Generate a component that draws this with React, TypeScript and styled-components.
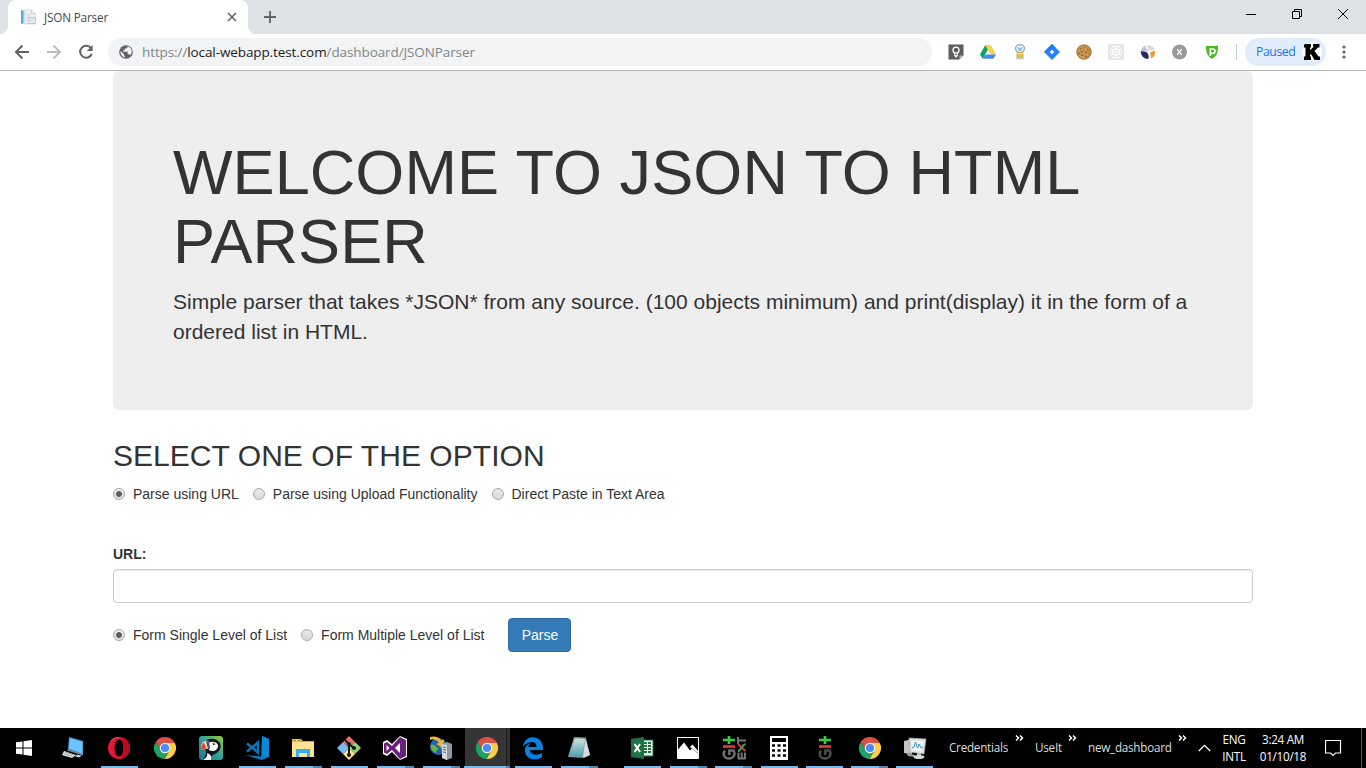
import React, { useState } from "react";
import styled, { createGlobalStyle } from "styled-components";

const GlobalStyle = createGlobalStyle`
  *, *::before, *::after { box-sizing: border-box; }
  body { margin: 0; background: #fff; overflow: hidden; }
  svg { display: block; flex: none; }
`;

const uiFont = `"Open Sans", "Noto Sans", sans-serif`;

const Screen = styled.div`
  width: 1366px;
  height: 768px;
  display: flex;
  flex-direction: column;
  overflow: hidden;
  background: #fff;
`;

/* Browser window */

const TabStrip = styled.div`
  height: 34px;
  flex: none;
  display: flex;
  background: #dee1e6;
`;

const TabFoot = styled.div<{ $side: "left" | "right" }>`
  width: 8px;
  align-self: stretch;
  background: radial-gradient(
    circle at ${(p) => (p.$side === "left" ? "0" : "100%")} 26px,
    #dee1e6 7.5px,
    #fff 8.5px
  );
  clip-path: inset(26px 0 0 0);
`;

const Tab = styled.div`
  width: 240px;
  display: flex;
  align-items: center;
  padding: 0 10px 0 12px;
  background: #fff;
  border-radius: 8px 8px 0 0;
`;

const TabTitle = styled.span`
  flex: 1;
  margin-left: 8px;
  font: 11.7px/16px ${uiFont};
  letter-spacing: -0.15px;
  color: #45494d;
`;

const NewTab = styled.div`
  padding: 10px 0 0 7px;
`;

const WindowControls = styled.div`
  margin-left: auto;
  display: flex;
  height: 28px;
`;

const WindowButton = styled.div`
  width: 46px;
  display: flex;
  align-items: center;
  justify-content: center;
`;

const Toolbar = styled.div`
  height: 37px;
  flex: none;
  display: flex;
  align-items: center;
  padding: 0 14px;
  background: #fff;
  border-bottom: 1px solid #b5b4b6;
`;

const NavButtons = styled.div`
  display: flex;
  gap: 16px;
  width: 94px;
`;

const AddressBar = styled.div`
  width: 824px;
  height: 28px;
  display: flex;
  align-items: center;
  padding-left: 10px;
  gap: 8px;
  border-radius: 14px;
  background: #f1f3f4;
`;

const Address = styled.span`
  font: 13.5px/20px ${uiFont};
  letter-spacing: -0.1px;
  color: #80868b;
  white-space: nowrap;
`;

const Host = styled.span`
  color: #202124;
`;

const Extensions = styled.div`
  display: flex;
  gap: 16px;
  margin-left: 16px;
`;

const Separator = styled.div`
  width: 1px;
  height: 16px;
  margin: 0 8px 0 16px;
  background: #c8cbcf;
`;

const ProfilePill = styled.div`
  width: 81px;
  height: 28px;
  display: flex;
  align-items: center;
  justify-content: space-between;
  padding: 0 4px 0 11px;
  border-radius: 14px;
  background: #e1ecfb;
  font: 12.3px/20px ${uiFont};
  letter-spacing: -0.45px;
  color: #1a73e8;
`;

const MenuDots = styled.div`
  margin-left: 16px;
`;

/* Page */

const Page = styled.main`
  flex: 1;
  width: 1140px;
  margin: 0 auto;
  font: 14px/20px "Liberation Sans", Arial, sans-serif;
  color: #333;
`;

const Jumbotron = styled.section`
  height: 339px;
  padding: 67px 60px 48px;
  margin-bottom: 29px;
  border-radius: 6px;
  background: #eee;
`;

const Title = styled.h1`
  margin: 0 0 10px;
  font-size: 63px;
  font-weight: 400;
  line-height: 69.3px;
  letter-spacing: 0.08px;
`;

const Lead = styled.p`
  margin: 0;
  font-size: 21px;
  line-height: 30px;
`;

const SectionTitle = styled.h2`
  margin: 0 0 12px;
  font-size: 30px;
  font-weight: 400;
  line-height: 33px;
  letter-spacing: 0.04px;
`;

const OptionRow = styled.div`
  display: flex;
  align-items: center;
  gap: 14px;
`;

const Option = styled.label`
  display: flex;
  align-items: center;
  gap: 8px;
  white-space: nowrap;
`;

const Radio = styled.input`
  appearance: none;
  width: 12px;
  height: 12px;
  margin: 0;
  border: 1px solid #a9a9a9;
  border-radius: 50%;
  background: linear-gradient(#e9e9e9, #d9d9d9);
  &:checked {
    background: radial-gradient(circle, #5c5c5c 2.5px, transparent 3.3px),
      linear-gradient(#ececec, #dedede);
  }
`;

const UrlField = styled.div`
  margin: 40px 0 15px;
`;

const FieldLabel = styled.label`
  display: block;
  margin-bottom: 5px;
  font-weight: 700;
`;

const TextInput = styled.input`
  display: block;
  width: 100%;
  height: 34px;
  padding: 6px 12px;
  border: 1px solid #ccc;
  border-radius: 4px;
  box-shadow: inset 0 1px 1px rgba(0, 0, 0, 0.075);
  font: inherit;
  outline: none;
`;

const ParseButton = styled.button`
  width: 63px;
  height: 34px;
  margin-left: 10px;
  padding: 0;
  border: 1px solid #2e6da4;
  border-radius: 4px;
  background: #337ab7;
  color: #fff;
  font: inherit;
`;

/* Taskbar */

const Taskbar = styled.footer`
  height: 40px;
  flex: none;
  display: flex;
  background: #000;
  color: #fff;
  font: 11.7px/17px ${uiFont};
`;

const StartButton = styled.div`
  width: 50px;
  display: flex;
  align-items: center;
  padding-left: 16px;
`;

const TaskSlot = styled.div<{ $active?: boolean; $width: number; $gap?: number }>`
  width: ${(p) => p.$width}px;
  margin-left: ${(p) => p.$gap ?? 0}px;
  display: flex;
  flex-direction: column;
  align-items: center;
  justify-content: space-between;
  padding-top: 8px;
  background: ${(p) =>
    p.$active
      ? "linear-gradient(90deg, #000 1px, #353535 1px, #353535 42px, #1c1c1c 42px, #1c1c1c 43px, #303030 43px)"
      : "none"};
`;

const RunningBar = styled.div<{ $grouped?: boolean; $full?: boolean; $hidden?: boolean }>`
  width: ${(p) => (p.$full ? "100%" : "37px")};
  height: 2px;
  visibility: ${(p) => (p.$hidden ? "hidden" : "visible")};
  background: ${(p) =>
    p.$grouped
      ? `linear-gradient(90deg, #76b9ed ${p.$full ? 42 : 28}px, #5585aa ${p.$full ? 42 : 28}px)`
      : "#76b9ed"};
`;

const Tray = styled.div`
  flex: 1;
  display: flex;
  margin-left: 12px;
`;

const TrayFolder = styled.div<{ $width: number }>`
  width: ${(p) => p.$width}px;
  display: flex;
  justify-content: space-between;
  padding-top: 11px;
  margin-right: 11px;
  letter-spacing: -0.25px;
  color: #ddd;
  white-space: nowrap;
  svg { margin-top: -4px; }
`;

const TrayChevron = styled.div`
  width: 13px;
  margin: 16px 0 0;
`;

const TrayStack = styled.div<{ $width: number }>`
  width: ${(p) => p.$width}px;
  padding-top: 3px;
  text-align: center;
  letter-spacing: -0.3px;
  white-space: nowrap;
`;

const Notifications = styled.div`
  margin: 12px 0 0 16px;
`;

const ShowDesktop = styled.div`
  width: 5px;
  margin-left: auto;
  border-left: 1px solid #555;
`;

type IconProps = { size?: number; box?: number; children: React.ReactNode };
const Icon = ({ size = 24, box = 24, children }: IconProps) => (
  <svg width={size} height={size} viewBox={`0 0 ${box} ${box}`} fill="none">
    {children}
  </svg>
);

const ChromeLogo = () => (
  <Icon>
    <path fill="#dd5144" d="M2.77 6A11 11 0 0 1 21.8 7H12l-4.33 7.5Z" />
    <path fill="#ffcd46" d="M21.8 7A11 11 0 0 1 11.43 23l4.9-8.5L12 7Z" />
    <path fill="#1da261" d="M11.43 23A11 11 0 0 1 2.77 6l4.9 8.5h8.66Z" />
    <circle cx="12" cy="12" r="5.3" fill="#f4f4f4" />
    <circle cx="12" cy="12" r="4.1" fill="#4c8bf5" />
  </Icon>
);

const DocumentIcon = () => (
  <Icon size={16} box={16}>
    <path d="M1 1h5v14H1z" fill="#deecf5" />
    <path d="M1 1.5h2.500v13H1z" fill="#5da7d5" />
    <path d="M5 1h7l3 3v11H5z" fill="#f2f3f5" stroke="#d0d3d8" strokeWidth=".8" />
    <path d="M11.5 1v3.5H15M6.500 5H11M6.500 7H10" stroke="#d0d4da" />
    <path d="M8 8.5h7.5v6H8z" fill="#eef0f3" stroke="#b5bac3" strokeWidth=".8" />
    <path d="M9 10.5h5M9 12h5" stroke="#d2d5da" strokeWidth=".8" />
  </Icon>
);

const extensionIcons: React.ReactNode[] = [
  <Icon size={16} box={16}>
    <path d="M.5.5h15v11l-4 4H.5z" fill="#5d5d5d" />
    <path d="M11.5 15.5v-4h4z" fill="#bcbcbc" />
    <circle cx="8" cy="6.2" r="3" stroke="#fff" strokeWidth="1.3" />
    <path d="M6.7 8.800v3h2.6v-3M7 12.600h2" stroke="#fff" strokeWidth="1.1" />
  </Icon>,
  <Icon size={16} box={16}>
    <path d="M5.3 1 0 10.4l2.7 4.3 5.4-9.4z" fill="#11a15f" />
    <path d="M5.3 1h5.4L16 10.4h-5.4z" fill="#ffcf48" />
    <path d="M2.7 14.7 5.2 10.4H16l-2.6 4.3z" fill="#4688f4" />
  </Icon>,
  <Icon size={16} box={16}>
    <path d="M6 9 3.7 5.8V3L5.4.8h5.2L12.3 3v2.8L10 9z" fill="#e9f2ff" stroke="#668fc5" />
    <path d="m6 3 1 4 1-3 1 3 1-4" stroke="#98b7df" />
    <path d="M5 8.5h6v5H5z" fill="#e5c345" stroke="#b99730" strokeWidth=".7" />
    <path d="M5 9.500h6" stroke="#fff0a1" />
    <path d="M4 14.800h8" stroke="#bbb" />
  </Icon>,
  <Icon size={16} box={16}>
    <path d="m8 0 8 8-8 8-8-8z" fill="#2684ff" />
    <path d="m8 0 3 3-3 3-3 3-5-1z" fill="#247cf0" />
    <path d="m8 5.8 2.2 2.2L8 10.2 5.8 8z" fill="#fff" />
  </Icon>,
  <Icon size={16} box={16}>
    <circle cx="8" cy="8" r="7.3" fill="#c3914b" stroke="#8a6130" strokeWidth=".7" />
    <path d="M4 4h1.500M8.500 3h1M11 5.500h1.500M5 7.500h1.500M2.500 9.500H4M9.500 8.500H11M5.500 11.500H7M9.500 12.500H11M12.500 10h1" stroke="#7d5526" strokeWidth="1.2" />
    <path d="M4 3h2M9 5h2M3 7h1M7 9h2M10 11h2M6 13h2" stroke="#dab071" strokeWidth=".8" />
  </Icon>,
  <Icon size={16} box={16}>
    <path d="M0 0h16v16H0z" fill="#e4e4e4" />
    <g stroke="#fff" strokeWidth="1">
      <ellipse cx="8" cy="8" rx="6.5" ry="2.6" />
      <ellipse cx="8" cy="8" rx="6.5" ry="2.6" transform="rotate(60 8 8)" />
      <ellipse cx="8" cy="8" rx="6.5" ry="2.6" transform="rotate(120 8 8)" />
    </g>
    <circle cx="8" cy="8" r="1.3" fill="#fff" />
  </Icon>,
  <Icon size={16} box={16}>
    <path d="M.8 7.200A7 7 0 0 1 6 1.500c-.5 2.500.5 4 2.500 5L8 7.500z" fill="#c3c6ca" />
    <path d="M.8 7.500c2.500-.8 5 .2 6.700 1.500 1 1.500 1.500 3.500 1 5.700C4 15.300.8 12 .8 7.500Z" fill="#242e5e" />
    <path d="M7.500 1c4 0 7 2.300 7.500 5.200-2-.6-4-.2-5.300.6C7.500 6 6.800 3 7.500 1Z" fill="#dadbdd" />
    <path d="M15.200 7c.3 3.500-1.500 6.800-4.500 7.500.5-2.500-.2-4-.9-5.300 1.200-1.800 3.400-2.400 5.400-2.200Z" fill="#f49a27" />
  </Icon>,
  <Icon size={16} box={16}>
    <circle cx="7.500" cy="8" r="7.5" fill="#999" />
    <path d="m5.300 5.2 4.400 5.600m0-5.600-4.400 5.600" stroke="#fff" strokeWidth="1.3" />
  </Icon>,
  <Icon size={16} box={16}>
    <path d="M2 2c4 .2 8 .2 12-.5C14 9 13 12 7.700 15 3.700 12 2 9 2 2Z" fill="#45bd22" />
    <path d="M6.300 12V5h2.500a2.200 2.200 0 0 1 0 4.400H7" stroke="#fff" strokeWidth="1.6" />
  </Icon>,
];

const DesktopIcon = () => (
  <Icon>
    <path d="m8 1 14 4v14L7 13z" fill="#3e9cd5" />
    <path d="m8.800 2.200 12.500 3.500v11.800L8 12.400z" fill="#69c4ff" />
    <path d="m7 13 15 5v1.500L6 14.500z" fill="#7b8991" />
    <path d="m3 15 12 4-4 3-10-3z" fill="#e6ebed" />
    <path d="m4 16 9 3M2.500 17.500l9 3" stroke="#939da3" />
    <path d="m16 18.500 5 1.300-3 1.700-4-1z" fill="#c8cfd4" />
  </Icon>
);

const OperaIcon = () => (
  <Icon>
    <path fillRule="evenodd" d="M12 1a11 11 0 1 0 0 22 11 11 0 0 0 0-22Zm0 2.500c2.800 0 4.500 3.600 4.500 8.500s-1.700 8.500-4.500 8.500S7.500 17 7.500 12 9.200 3.500 12 3.500Z" fill="#e41830" />
    <path fillRule="evenodd" d="M12 1a11 11 0 0 1 7 19.500c-2 1.300-4.500 1-7 0 2.800 0 4.500-3.600 4.500-8.500S14.800 3.500 12 3.500c2.500-1 4.500-1 7 0C17 2 14.500 1 12 1Z" fill="#b80d20" />
    <path d="M12 1.500C8 1.500 5 3 3.500 5.500" stroke="#ff4a58" />
  </Icon>
);

const PuffinIcon = () => (
  <Icon>
    <defs>
      <linearGradient id="puffin" x1="0" y1="1" x2="1" y2="0">
        <stop stopColor="#17709b" />
        <stop offset=".55" stopColor="#36a49a" />
        <stop offset="1" stopColor="#9acb35" />
      </linearGradient>
    </defs>
    <rect width="24" height="24" rx="3" fill="url(#puffin)" />
    <path d="M6 6c3-5 12-4 15 1 2 5-1 9-5 11-3 1-5 4-8 6H4l3-6z" fill="#101b20" />
    <path d="M8 8c3-3 9-3 11 1 .5 4-4 8-9 5z" fill="#fff" />
    <path d="M10 5C5 4 1 7 2 14c3-2 6-1 9-1z" fill="#f1dfb7" />
    <path d="M2 14c0-4 1-6 3-7.500L7.500 13C5 12.500 3.500 13 2 14Z" fill="#d94b33" />
    <path d="M7 5.500 10 5l1 8H9z" fill="#45576a" />
    <path d="m13 8 2-1.500L16.500 9z" fill="#e05a35" />
    <circle cx="14.700" cy="8.200" r=".8" fill="#16191b" />
    <path d="M8 17c3 1 5 3 4 7H4c3-2 5-4 4-7Z" fill="#f6f7ed" />
  </Icon>
);

const CodeIcon = () => (
  <Icon>
    <path d="m17 0 7 3v18l-7 3-17-5 16 1.5z" fill="#0879bf" />
    <path d="M17 0v22l7-2V3z" fill="#0789d8" />
    <path d="m2 7.500 11 9v-10l-11 9" stroke="#0879bf" strokeWidth="2.500" />
  </Icon>
);

const ExplorerIcon = () => (
  <Icon>
    <path d="M1 3h9l2 2h11v16H1z" fill="#d9a935" />
    <path d="M2 3h7v3H2z" fill="#f3c95b" />
    <path d="M1 6h22v15H1z" fill="#ffe293" />
    <path d="M5 21v-8h14v8h-3v-4H8v4z" fill="#37aee5" />
    <path d="M3 4.500h2m2 0h2" stroke="#9d792b" />
  </Icon>
);

const GitIcon = () => (
  <Icon>
    <path d="m12 0 6 6-6 6-6-6z" fill="#f26d66" />
    <path d="m18 6 6 6-6 6-6-6z" fill="#94d47a" />
    <path d="m6 6 6 6-6 6-6-6z" fill="#77b8f5" />
    <path d="m12 12 6 6-6 6-6-6z" fill="#ffe18a" />
    <path d="m8 4 4 4v12m0-12 5 4" stroke="#14181c" strokeWidth="2" />
    <circle cx="12" cy="8" r="2" fill="#14181c" />
    <circle cx="12" cy="19" r="2" fill="#14181c" />
    <circle cx="17" cy="12" r="2" fill="#14181c" />
  </Icon>
);

const StudioIcon = () => (
  <Icon>
    <path d="m17 0 7 3v18l-7 3-8-8-5 4-4-2V6l4-2 5 4z" fill="#fff" />
    <path d="m17 1 6 3v16l-6 3-8-9-5 4-3-1.5v-9L4 6l5 4zM3.500 9v6l3-3zM17 7l-5 5 5 5z" fill="#68217a" fillRule="evenodd" />
  </Icon>
);

const ServerIcon = () => (
  <Icon>
    <circle cx="9.500" cy="10.500" r="8.500" fill="#2361b4" />
    <path d="M1.500 9c4-2 5 2 8 3l-3 5-4-3zM10 8c3-2 5 0 6 2l-3 5z" fill="#66b63d" />
    <path d="M1 1c5-1.500 9 0 11 3.500l3-1L14 12 7 8l3-1.300C8 4 5 3 1 4z" fill="#f6b62d" />
    <path d="m13 8 5-2 5 2v14l-5 2-5-2z" fill="#8f989f" />
    <path d="m13 8 5 1v15l-5-2z" fill="#d3d7da" />
    <path d="m14 11 3 .5m-3 2 3 .5m-3 2 3 .5" stroke="#627078" />
  </Icon>
);

const EdgeIcon = () => (
  <Icon>
    <path d="M2 10.500C4-3 22-1 22 12v2H9c0 5 7 6 12 3v4.500C12 26 3.500 22 4 14c.2-4 3-6 6-7-2 1.200-2.400 2.300-2.700 4h8.300c0-7-8.500-6-13.600-.5Z" fill="#0780df" />
  </Icon>
);

const NotepadIcon = () => (
  <Icon>
    <defs>
      <linearGradient id="notepad" x1="0" y1="0" x2="0" y2="1">
        <stop stopColor="#cfe2e2" />
        <stop offset="1" stopColor="#4d9eb1" />
      </linearGradient>
    </defs>
    <path d="m7 1 12 1 4 17-6 3-16-1z" fill="#8f9491" />
    <path d="m8 2 10 1-3 18-13.500-1z" fill="url(#notepad)" />
    <path d="m18.500 3 4.500 16-6 2.500-1-1z" fill="#d7dce0" />
    <path d="M7 2h12" stroke="#9c978a" />
  </Icon>
);

const ExcelIcon = () => (
  <Icon>
    <path d="M12 4h11v16H12z" fill="#e8f1eb" stroke="#207245" />
    <path d="M14 7h3m1 0h3M14 10h3m1 0h3M14 13h3m1 0h3M14 16h3m1 0h3" stroke="#207245" strokeWidth="1.8" />
    <path d="m1 3 13-2v22L1 21z" fill="#207245" />
    <path d="m4.500 8 5.500 8M10 8l-5.500 8" stroke="#fff" strokeWidth="2" />
  </Icon>
);

const PhotosIcon = () => (
  <Icon>
    <path d="M1.500 1.500h21v21h-21z" stroke="#fff" />
    <path d="m2 13.500 6-7 6 8 2-2 6 5v5H2z" fill="#fff" />
    <path d="m14 11 2.500-2.500L22 15v2z" fill="#fff" />
  </Icon>
);

const GitGuiIcon = ({ extended = false }: { extended?: boolean }) => {
  const letter = extended ? "#6f6f6f" : "#4a4a4a";
  return (
    <Icon>
      <g transform={extended ? "translate(0 0)" : "translate(5 0)"}>
        <path d="M7 0v8M1 4h12" stroke="#3fc649" strokeWidth="2.700" />
        <path d="M1 10.500h12" stroke="#dc3b35" strokeWidth="2.700" />
        <path d="M3 14.500c-3 4-.5 8 4 8s7-4 4.500-8H7.300v4.500" stroke={letter} strokeWidth="2.400" />
      </g>
      {extended && (
        <g strokeWidth="1.900">
          <path d="M16 1v7m0-3.500h8M16.500 16.500v6h6.500v-6m-3.300 0v6" stroke="#777" />
          <path d="m16 8 7.500 7" stroke="#da3b35" />
          <path d="M16 15c3 0 4-6 7.500-7" stroke="#42a947" />
        </g>
      )}
    </Icon>
  );
};

const CalculatorIcon = () => (
  <Icon>
    <path d="M3 0h18v24H3z" fill="#fff" />
    <path d="M5 2h14v4H5z" fill="#000" />
    <path d="M5 9.500h14M5 14.500h14M5 19.500h14" stroke="#000" strokeWidth="2.600" strokeDasharray="3 2.500" />
  </Icon>
);

const MonitorIcon = () => (
  <Icon>
    <path d="m1 5 8-2v15l-8-1z" fill="#c3c6c4" />
    <path d="m3 17 9 2v2l-7-1z" fill="#999f9f" />
    <path d="m6 2 17 1-2 15-14-2z" fill="#dfe2df" stroke="#9da7a9" strokeWidth=".7" />
    <path d="m8.500 4.500 12 .7-1 10-11-1z" fill="#eef8fb" />
    <path d="m9 12 2-1 1.500-5 2 6 1.500-4 2 4 2-1" stroke="#3c92ba" />
    <path d="M14 17h4v3h-4z" fill="#b7bcbb" />
    <ellipse cx="16" cy="21" rx="5.500" ry="2" fill="#d7d9d8" />
  </Icon>
);

type Task = { name: string; icon: React.ReactNode; width?: number; gap?: number; idle?: boolean; grouped?: boolean; active?: boolean };
const tasks: Task[] = [
  { name: "desktop", icon: <DesktopIcon />, idle: true },
  { name: "opera", icon: <OperaIcon /> },
  { name: "chrome", icon: <ChromeLogo />, idle: true },
  { name: "puffin", icon: <PuffinIcon />, idle: true },
  { name: "code", icon: <CodeIcon /> },
  { name: "explorer", icon: <ExplorerIcon />, grouped: true },
  { name: "git", icon: <GitIcon /> },
  { name: "studio", icon: <StudioIcon />, grouped: true },
  { name: "server", icon: <ServerIcon />, grouped: true },
  { name: "chrome-active", icon: <ChromeLogo />, active: true, grouped: true },
  { name: "edge", icon: <EdgeIcon /> },
  { name: "notepad", icon: <NotepadIcon />, grouped: true },
  { name: "excel", icon: <ExcelIcon />, gap: 17 },
  { name: "photos", icon: <PhotosIcon />, grouped: true },
  { name: "gitext", icon: <GitGuiIcon extended />, width: 45, grouped: true },
  { name: "calculator", icon: <CalculatorIcon /> },
  { name: "gitgui", icon: <GitGuiIcon />, width: 45 },
  { name: "chrome-profile", icon: <ChromeLogo />, width: 45, grouped: true },
  { name: "monitor", icon: <MonitorIcon />, width: 45 },
];

const MoreMark = () => (
  <svg width="9" height="6" viewBox="0 0 9 6" fill="none">
    <path d="m1 .5 2.500 2.500L1 5.500M5 .5 7.500 3 5 5.500" stroke="#fff" strokeWidth="1.500" />
  </svg>
);

const folders = [
  { name: "Credentials", width: 75 },
  { name: "UseIt", width: 42 },
  { name: "new_dashboard", width: 99 },
];

const sources = ["Parse using URL", "Parse using Upload Functionality", "Direct Paste in Text Area"];
const levels = ["Form Single Level of List", "Form Multiple Level of List"];

function RadioGroup({ name, options, children }: { name: string; options: string[]; children?: React.ReactNode }) {
  const [selected, setSelected] = useState(options[0]);
  return (
    <OptionRow>
      {options.map((option) => (
        <Option key={option}>
          <Radio type="radio" name={name} checked={selected === option} onChange={() => setSelected(option)} />
          {option}
        </Option>
      ))}
      {children}
    </OptionRow>
  );
}

export default function App() {
  return (
    <Screen>
      <GlobalStyle />
      <TabStrip>
        <TabFoot $side="left" />
        <Tab>
          <DocumentIcon />
          <TabTitle>JSON Parser</TabTitle>
          <Icon size={12} box={12}><path d="m2 2 8 8m0-8-8 8" stroke="#5f6368" strokeWidth="1.6" /></Icon>
        </Tab>
        <TabFoot $side="right" />
        <NewTab><Icon size={14} box={14}><path d="M7 1v12M1 7h12" stroke="#5f6368" strokeWidth="1.8" /></Icon></NewTab>
        <WindowControls>
          <WindowButton><Icon size={10} box={10}><path d="M0 5.500h10" stroke="#000" /></Icon></WindowButton>
          <WindowButton><Icon size={10} box={10}><path d="M.5 2.500h7v7h-7zM2.500 2.500v-2h7v7h-2" stroke="#000" /></Icon></WindowButton>
          <WindowButton><Icon size={10} box={10}><path d="m0 0 10 10M10 0 0 10" stroke="#000" /></Icon></WindowButton>
        </WindowControls>
      </TabStrip>
      <Toolbar>
        <NavButtons>
          <Icon size={16} box={16}><path d="M15 8H2m6.500-6.500L2 8l6.500 6.500" stroke="#5f6368" strokeWidth="2" /></Icon>
          <Icon size={16} box={16}><path d="M1 8h13M7.500 1.500 14 8l-6.500 6.500" stroke="#babcbe" strokeWidth="2" /></Icon>
          <Icon size={16} box={16}>
            <path d="M13 4.200A6 6 0 1 0 13.700 10" stroke="#5f6368" strokeWidth="2" />
            <path d="M14.700 1v6H8.800z" fill="#5f6368" />
          </Icon>
        </NavButtons>
        <AddressBar>
          <Icon size={16} box={16}>
            <circle cx="8" cy="8" r="6.800" fill="#5f6368" />
            <path d="M9.500 2.200v1.200L8.300 4.600H6.800v1.700H5.200v1.500h4.500v2.400h1.500l1.200.9A5.500 5.500 0 0 0 9.500 2.200ZM2.600 7 6 10.300v1.300l1.200 1.100v.8A5.500 5.500 0 0 1 2.600 7Z" fill="#f1f3f4" />
          </Icon>
          <Address>https://<Host>local-webapp.test.com</Host>/dashboard/JSONParser</Address>
        </AddressBar>
        <Extensions>
          {extensionIcons.map((icon, index) => <React.Fragment key={index}>{icon}</React.Fragment>)}
        </Extensions>
        <Separator />
        <ProfilePill>
          Paused
          <Icon size={20} box={20}>
            <circle cx="10" cy="10" r="10" fill="#fff" />
            <path d="M3 2h6v3.500H8V8l4-3.500h-1V2h6.500v3.500H16l-3.500 3.500 4 5.500H18V18h-5.500l-3.500-6-1 1v1.500h1V18H2v-3.500h1.500v-9H2V3z" fill="#000" />
          </Icon>
        </ProfilePill>
        <MenuDots><svg width="4" height="14" viewBox="0 0 4 14" fill="#5f6368"><circle cx="2" cy="2" r="1.600" /><circle cx="2" cy="7" r="1.600" /><circle cx="2" cy="12" r="1.600" /></svg></MenuDots>
      </Toolbar>
      <Page>
        <Jumbotron>
          <Title>WELCOME TO JSON TO HTML PARSER</Title>
          <Lead>Simple parser that takes *JSON* from any source. (100 objects minimum) and print(display) it in the form of a ordered list in HTML.</Lead>
        </Jumbotron>
        <SectionTitle>SELECT ONE OF THE OPTION</SectionTitle>
        <RadioGroup name="source" options={sources} />
        <UrlField>
          <FieldLabel htmlFor="url">URL:</FieldLabel>
          <TextInput id="url" />
        </UrlField>
        <RadioGroup name="level" options={levels}><ParseButton>Parse</ParseButton></RadioGroup>
      </Page>
      <Taskbar>
        <StartButton>
          <Icon size={16} box={16}><path d="m0 2.300 6.500-.9v6.100H0zM7.500 1.200 16 0v7.500H7.500zM0 8.500h6.500v6.100L0 13.700zM7.500 8.500H16V16l-8.500-1.200z" fill="#fff" /></Icon>
        </StartButton>
        {tasks.map((task) => (
          <TaskSlot key={task.name} $width={task.width ?? 46} $gap={task.gap} $active={task.active}>
            {task.icon}
            <RunningBar $hidden={task.idle} $grouped={task.grouped} $full={task.active} />
          </TaskSlot>
        ))}
        <Tray>
          {folders.map((folder) => (
            <TrayFolder key={folder.name} $width={folder.width}>
              {folder.name}<MoreMark />
            </TrayFolder>
          ))}
          <TrayChevron><svg width="13" height="8" viewBox="0 0 13 8" fill="none"><path d="m.8 7 5.700-5.700L12.200 7" stroke="#fff" strokeWidth="1.300" /></svg></TrayChevron>
          <TrayStack $width={46}>ENG<br />INTL</TrayStack>
          <TrayStack $width={52}>3:24 AM<br />01/10/18</TrayStack>
          <Notifications><svg width="17" height="17" viewBox="0 0 17 17" fill="none"><path d="M.5.5h15v12.500h-5l-2.500 2.500-2.500-2.500h-5z" stroke="#fff" strokeWidth="1.200" /></svg></Notifications>
          <ShowDesktop />
        </Tray>
      </Taskbar>
    </Screen>
  );
}
